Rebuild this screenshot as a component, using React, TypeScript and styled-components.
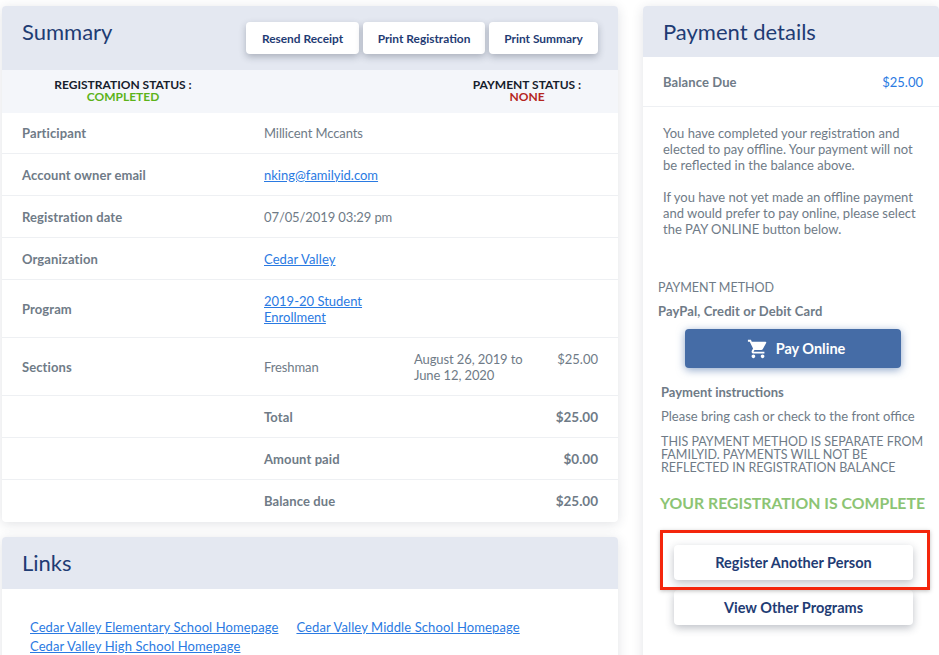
import React from "react";
import styled, { createGlobalStyle } from "styled-components";

const Global = createGlobalStyle`
  html, body { margin: 0; padding: 0; background: #fff; overflow: hidden; height: 655px; }
  body { font-family: "Lato", "Liberation Sans", sans-serif; font-size: 13px; color: #6f7b87; }
  * { box-sizing: border-box; }
`;
const Page = styled.div`
  display: grid; grid-template-columns: 616px 296px; column-gap: 25px;
  width: 939px; height: 655px; padding: 6px 0 0 2px; overflow: hidden;
`;
const Column = styled.div`display: flex; flex-direction: column; gap: 15px;`;
const Card = styled.section`
  background: #fff; border-radius: 4px; box-shadow: 0 2px 12px rgba(40,50,70,.14);
`;
const Header = styled.header<{ $h: number }>`
  height: ${p => p.$h}px; background: #e4e8f1; border-radius: 4px 4px 0 0;
  display: flex; justify-content: space-between; padding: 0 20px;
`;
const Title = styled.h2`
  margin: 12px 0 0; font-size: 22px; line-height: 28px; font-weight: 400; color: #1f3c74;
`;
const HeaderActions = styled.div`display: flex; gap: 4px; padding-top: 16px;`;
const SmallButton = styled.button<{ $w: number }>`
  width: ${p => p.$w}px; height: 32px; padding: 0; border: 0; border-radius: 4px; background: #fff; white-space: nowrap;
  color: #1f3c74; font: 700 11.9px "Lato", sans-serif; box-shadow: 0 3px 7px rgba(40,50,70,.3);
`;
const StatusBand = styled.div`
  height: 43px; background: #f4f6fa; display: grid; grid-template-columns: 242px 1fr 160px; padding: 9px 11px 0 0;
  text-align: center; font-weight: 700; font-size: 12px; line-height: 12px; color: #16202c;
`;
const StatusCell = styled.div<{ $col: number }>`grid-column: ${p => p.$col};`;
const StatusValue = styled.div<{ $c: string }>`color: ${p => p.$c};`;
const Row = styled.div<{ $h: number; $last?: boolean }>`
  height: ${p => p.$h}px; display: grid; grid-template-columns: 242px 150px 1fr; align-items: center;
  padding: 0 20px; border-bottom: ${p => p.$last ? "0" : "1px solid #eef0f3"}; line-height: 16px;
`;
const Label = styled.div`font-weight: 700; color: #6f7b87; letter-spacing: .1px;`;
const Value = styled.div<{ $span?: boolean }>`letter-spacing: -.1px; ${p => p.$span ? "grid-column: 2 / 4;" : ""}`;
const Amount = styled.div`text-align: right; font-weight: 700; font-size: 13.5px;`;
const BLabel = styled(Label)`grid-column: 2;`;
const A = styled.a<{ $tight?: boolean }>`
  color: #2a7ae2; text-decoration: underline; letter-spacing: ${p => p.$tight ? "0" : ".1px"};
`;
const ProgramLink = styled(A)`display: block; width: 120px;`;
const LinksBody = styled.div`
  padding: 31px 28px 40px; display: flex; flex-wrap: wrap; column-gap: 18px; row-gap: 4px; line-height: 15px;
`;
const Balance = styled.div`
  height: 50px; display: flex; justify-content: space-between; align-items: center;
  padding: 0 16px 0 20px; border-bottom: 1px solid #eef0f3;
`;
const BalanceValue = styled.span`color: #2a7ae2;`;
const Note = styled.p`margin: 0 0 16px; padding-left: 20px; width: 280px; line-height: 16px;`;
const Notes = styled.div`padding-top: 18px;`;
const Method = styled.div`padding: 27px 0 0 15px;`;
const MethodLabel = styled.div`line-height: 16px; font-size: 12.5px;`;
const MethodName = styled.div`font-weight: 700; line-height: 16px; margin-top: 7px; letter-spacing: .1px;`;
const Pay = styled.button`
  display: flex; align-items: center; justify-content: center; gap: 7px;
  width: 216px; height: 39px; margin: 10px 0 0 27px; padding: 0 0 0 6px; border: 0; border-radius: 4px;
  background: #456ca6; color: #fff; font: 700 14.5px "Lato", sans-serif;
  box-shadow: 0 2px 8px rgba(69,108,166,.6);
`;
const Instructions = styled.div`padding: 16px 0 0 18px; width: 290px;`;
const InstrTitle = styled.div`font-weight: 700; line-height: 16px;`;
const InstrText = styled.div`margin-top: 8px; line-height: 16px;`;
const InstrCaps = styled.div`margin-top: 11px; line-height: 13px; font-size: 12.5px;`;
const Complete = styled.div`
  margin: 20px 0 0 17px; font-weight: 700; font-size: 15.8px; line-height: 18px; color: #8cc474; white-space: nowrap;
`;
const Actions = styled.div`
  position: relative; padding: 33px 0 50px 31px; display: flex; flex-direction: column; gap: 10px;
`;
const WideButton = styled.button`
  width: 239px; height: 35px; border: 0; border-radius: 4px; background: #fff; color: #1f3c74;
  font: 700 14.5px "Lato", sans-serif; box-shadow: 0 3px 8px rgba(40,50,70,.3);
`;
const Highlight = styled.div`
  position: absolute; left: 17px; top: 18px; width: 270px; height: 60px;
  border: 3px solid #f4260c; box-shadow: 0 1px 4px rgba(0,0,0,.25); pointer-events: none;
`;
const DatesCell = styled.div`
  grid-column: 3; display: grid; grid-template-columns: 1fr auto; letter-spacing: -.1px;
`;
const SectionAmount = styled.div`text-align: right; letter-spacing: 0;`;

const Cart = () => (
  <svg width="22" height="22" viewBox="0 0 24 24" fill="#fff" aria-hidden="true">
    <path d="M7 18c-1.1 0-2 .9-2 2s.9 2 2 2 2-.9 2-2-.9-2-2-2zM1 2v2h2l3.6 7.59-1.35 2.45C5.09 14.32 5 14.65 5 15c0 1.1.9 2 2 2h12v-2H7.42c-.14 0-.25-.11-.25-.25l.03-.12L8.1 13h7.45c.75 0 1.41-.41 1.75-1.03L20.88 5.5A1 1 0 0 0 20 4H5.21l-.94-2H1zm16 16c-1.1 0-2 .9-2 2s.9 2 2 2 2-.9 2-2-.9-2-2-2z" />
  </svg>
);

export default function App() {
  return (
    <Page>
      <Global />
      <Column>
        <Card>
          <Header $h={64}>
            <Title>Summary</Title>
            <HeaderActions>
              <SmallButton $w={113}>Resend Receipt</SmallButton>
              <SmallButton $w={122}>Print Registration</SmallButton>
              <SmallButton $w={109}>Print Summary</SmallButton>
            </HeaderActions>
          </Header>
          <StatusBand>
            <StatusCell $col={1}>REGISTRATION STATUS :<StatusValue $c="#5cb31a">COMPLETED</StatusValue></StatusCell>
            <StatusCell $col={3}>PAYMENT STATUS :<StatusValue $c="#b5261e">NONE</StatusValue></StatusCell>
          </StatusBand>
          <Row $h={41}><Label>Participant</Label><Value $span>Millicent Mccants</Value></Row>
          <Row $h={42}><Label>Account owner email</Label><Value $span><A $tight href="#">nking@familyid.com</A></Value></Row>
          <Row $h={42}><Label>Registration date</Label><Value $span>07/05/2019 03:29 pm</Value></Row>
          <Row $h={42}><Label>Organization</Label><Value $span><A href="#">Cedar Valley</A></Value></Row>
          <Row $h={58}><Label>Program</Label><Value $span><ProgramLink $tight href="#">2019-20 Student Enrollment</ProgramLink></Value></Row>
          <Row $h={58}>
            <Label>Sections</Label>
            <Value>Freshman</Value>
            <DatesCell>
              <span>August 26, 2019 to<br />June 12, 2020</span>
              <SectionAmount>$25.00</SectionAmount>
            </DatesCell>
          </Row>
          <Row $h={42}><BLabel>Total</BLabel><Amount>$25.00</Amount></Row>
          <Row $h={42}><BLabel>Amount paid</BLabel><Amount>$0.00</Amount></Row>
          <Row $h={42} $last><BLabel>Balance due</BLabel><Amount>$25.00</Amount></Row>
        </Card>
        <Card>
          <Header $h={52}><Title>Links</Title></Header>
          <LinksBody>
            <A href="#">Cedar Valley Elementary School Homepage</A>
            <A href="#">Cedar Valley Middle School Homepage</A>
            <A href="#">Cedar Valley High School Homepage</A>
          </LinksBody>
        </Card>
      </Column>
      <Column>
        <Card>
          <Header $h={51}><Title>Payment details</Title></Header>
          <Balance><Label>Balance Due</Label><BalanceValue>$25.00</BalanceValue></Balance>
          <Notes>
            <Note>You have completed your registration and elected to pay offline. Your payment will not be reflected in the balance above.</Note>
            <Note>If you have not yet made an offline payment and would prefer to pay online, please select the PAY ONLINE button below.</Note>
          </Notes>
          <Method>
            <MethodLabel>PAYMENT METHOD</MethodLabel>
            <MethodName>PayPal, Credit or Debit Card</MethodName>
            <Pay><Cart />Pay Online</Pay>
          </Method>
          <Instructions>
            <InstrTitle>Payment instructions</InstrTitle>
            <InstrText>Please bring cash or check to the front office</InstrText>
            <InstrCaps>THIS PAYMENT METHOD IS SEPARATE FROM FAMILYID. PAYMENTS WILL NOT BE REFLECTED IN REGISTRATION BALANCE</InstrCaps>
          </Instructions>
          <Complete>YOUR REGISTRATION IS COMPLETE</Complete>
          <Actions>
            <WideButton>Register Another Person</WideButton>
            <WideButton>View Other Programs</WideButton>
            <Highlight />
          </Actions>
        </Card>
      </Column>
    </Page>
  );
}
